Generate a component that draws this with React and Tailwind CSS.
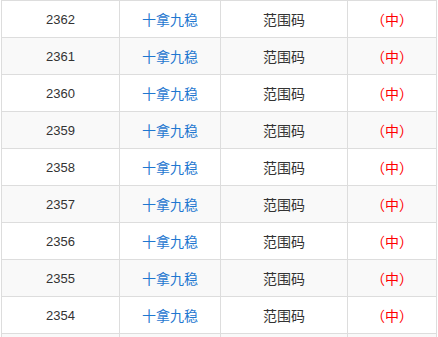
const rows = [2362, 2361, 2360, 2359, 2358, 2357, 2356, 2355, 2354];

export default function App() {
  return (
    <div className="min-h-screen bg-white">
      <div
        className="ml-px w-[436px] border-l border-t border-[#dddddd]"
        style={{ fontFamily: '"Liberation Sans", "Noto Sans CJK SC", sans-serif' }}
      >
        {rows.map((n, i) => (
          <div
            key={n}
            className={`grid grid-cols-[118px_101px_127px_89px] h-[37px] ${
              i % 2 === 1 ? "bg-[#f9f9f9]" : "bg-white"
            }`}
          >
            <div className="flex items-center justify-center pt-0.5 border-r border-b border-[#dddddd] text-[13px] text-[#333333]">
              {n}
            </div>
            <div className="flex items-center justify-center pt-0.5 border-r border-b border-[#dddddd] text-[14px] text-[#1f77d0]">
              十拿九稳
            </div>
            <div className="flex items-center justify-center pt-0.5 border-r border-b border-[#dddddd] text-[14px] text-[#333333]">
              范围码
            </div>
            <div className="flex items-center justify-center pt-0.5 border-r border-b border-[#dddddd] text-[14px] text-[#ff0000]">
              （中）
            </div>
          </div>
        ))}
        {/* next row, only its top edge shows */}
        <div className="grid grid-cols-[118px_101px_127px_89px] h-[37px] bg-[#f9f9f9]">
          <div className="border-r border-[#dddddd]" />
          <div className="border-r border-[#dddddd]" />
          <div className="border-r border-[#dddddd]" />
          <div className="border-r border-[#dddddd]" />
        </div>
      </div>
    </div>
  );
}
